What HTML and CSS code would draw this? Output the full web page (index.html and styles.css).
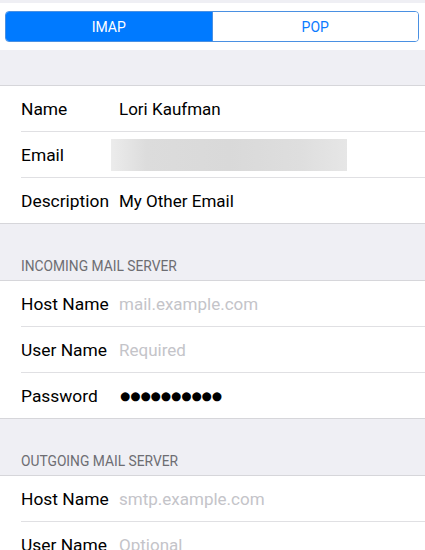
FILE: index.html
```html
<!DOCTYPE html>
<html>
<head>
<meta charset="utf-8">
<link rel="stylesheet" href="styles.css">
</head>
<body>
<div class="top">
  <div class="seg">
    <div class="seg-item active">IMAP</div>
    <div class="seg-item">POP</div>
  </div>
</div>
<div class="spacer"></div>
<div class="group">
  <div class="row"><span class="label">Name</span><span class="value">Lori Kaufman</span></div>
  <div class="row"><span class="label">Email</span><span class="blur"></span></div>
  <div class="row last"><span class="label">Description</span><span class="value">My Other Email</span></div>
</div>
<div class="header">INCOMING MAIL SERVER</div>
<div class="group">
  <div class="row"><span class="label">Host Name</span><span class="value ph">mail.example.com</span></div>
  <div class="row"><span class="label">User Name</span><span class="value ph">Required</span></div>
  <div class="row last"><span class="label">Password</span><span class="value dots">●●●●●●●●●●</span></div>
</div>
<div class="header">OUTGOING MAIL SERVER</div>
<div class="group">
  <div class="row"><span class="label">Host Name</span><span class="value ph">smtp.example.com</span></div>
  <div class="row"><span class="label">User Name</span><span class="value ph">Optional</span></div>
</div>
</body>
</html>
```

FILE: styles.css
```css
html, body {
  margin: 0;
  padding: 0;
}
body {
  background: #efeff4;
  font-family: "Roboto", "Liberation Sans", sans-serif;
  color: #000;
  width: 425px;
  overflow: hidden;
}
.top {
  margin-top: 3px;
  background: #fff;
  padding: 8px 6px 8px 5px;
}
.seg {
  display: flex;
  height: 31px;
  box-sizing: border-box;
  border: 1px solid #4a90e2;
  border-radius: 4px;
  overflow: hidden;
}
.seg-item {
  flex: 1;
  display: flex;
  align-items: center;
  justify-content: center;
  font-size: 14px;
  color: #0a7aff;
  background: #fff;
}
.seg-item.active {
  background: #007aff;
  color: #fff;
  border-right: 1px solid #4a90e2;
}
.spacer {
  height: 35px;
}
.group {
  background: #fff;
  border-top: 1px solid #d6d6da;
  border-bottom: 1px solid #d6d6da;
}
.row {
  height: 46px;
  display: flex;
  align-items: center;
  margin-left: 21px;
  border-bottom: 1px solid #e0e0e3;
  box-sizing: border-box;
}
.row.last {
  border-bottom: none;
  height: 45px;
}
.label {
  font-size: 17.4px;
  width: 98px;
  flex-shrink: 0;
  white-space: nowrap;
}
.value {
  font-size: 17px;
  white-space: nowrap;
}
.ph {
  color: #c4c4c9;
}
.dots {
  font-family: "DejaVu Sans", sans-serif;
  font-size: 11.7px;
  letter-spacing: 0;
  margin-left: 1px;
}
.blur {
  width: 236px;
  height: 32px;
  margin-left: -8px;
  background: linear-gradient(90deg, #ececec 0%, #dcdcdc 15%, #d9d9d9 50%, #dedede 80%, #e6e6e6 100%);
}
.header {
  height: 56px;
  box-sizing: border-box;
  padding: 0 0 6px 21px;
  display: flex;
  align-items: flex-end;
  font-size: 13.8px;
  color: #6d6d72;
}
```
